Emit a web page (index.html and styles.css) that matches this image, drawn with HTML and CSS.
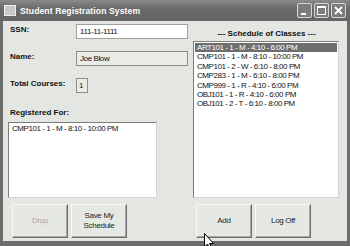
FILE: index.html
```html
<!DOCTYPE html>
<html lang="en">
<head>
    <meta charset="UTF-8">
    <title>Student Registration System</title>
    <link rel="stylesheet" href="styles.css">
</head>
<body>
    <div class="window">
        <div class="titlebar">
            <span class="app-icon"></span>
            <span class="title">Student Registration System</span>
            <div class="controls">
                <span class="ctl"><svg width="15" height="15" viewBox="0 0 15 15"><rect x="4" y="10" width="5" height="2" fill="#fff"/></svg></span>
                <span class="ctl"><svg width="15" height="15" viewBox="0 0 15 15"><rect x="3.5" y="3.5" width="8" height="8" fill="none" stroke="#fff"/><rect x="3" y="3" width="9" height="2" fill="#fff"/></svg></span>
                <span class="ctl"><svg width="15" height="15" viewBox="0 0 15 15"><path d="M4 4 L11 11 M11 4 L4 11" stroke="#fff" stroke-width="2"/></svg></span>
            </div>
        </div>
        <div class="content">
            <div class="left">
                <div class="row">
                    <label>SSN:</label>
                    <div class="field wide">111-11-1111</div>
                </div>
                <div class="row">
                    <label>Name:</label>
                    <div class="field wide readonly">Joe Blow</div>
                </div>
                <div class="row">
                    <label>Total Courses:</label>
                    <div class="field tiny readonly">1</div>
                </div>
                <label class="reg-label">Registered For:</label>
                <div class="listbox reg">
                    <div class="item">CMP101 - 1 - M - 8:10 - 10:00 PM</div>
                </div>
                <div class="buttons">
                    <button disabled>Drop</button>
                    <button>Save My<br>Schedule</button>
                </div>
            </div>
            <div class="right">
                <div class="heading">--- Schedule of Classes ---</div>
                <div class="listbox sched">
                    <div class="item selected">ART101 - 1 - M - 4:10 - 6:00 PM</div>
                    <div class="item">CMP101 - 1 - M - 8:10 - 10:00 PM</div>
                    <div class="item">CMP101 - 2 - W - 6:10 - 8:00 PM</div>
                    <div class="item">CMP283 - 1 - M - 6:10 - 8:00 PM</div>
                    <div class="item">CMP999 - 1 - R - 4:10 - 6:00 PM</div>
                    <div class="item">OBJ101 - 1 - R - 4:10 - 6:00 PM</div>
                    <div class="item">OBJ101 - 2 - T - 6:10 - 8:00 PM</div>
                </div>
                <div class="buttons">
                    <button>Add</button>
                    <button>Log Off</button>
                </div>
                <svg class="cursor" width="12" height="18" viewBox="0 0 12 18"><path d="M0.5 0.5 L0.5 14 L3.5 11 L6 16.5 L8 15.5 L5.5 10.5 L9.5 10.5 Z" fill="#fff" stroke="#000" stroke-width="1"/></svg>
            </div>
        </div>
    </div>
</body>
</html>
```

FILE: styles.css
```css
body {
    margin: 0;
    font-family: "Liberation Sans", Arial, sans-serif;
    font-size: 8px;
    color: #111;
    background: #fff;
}
.window {
    width: 350px;
    height: 246px;
    box-sizing: border-box;
    background: #e4e6e1;
    border: 3px solid #6c6c6c;
    border-top: none;
    border-bottom-width: 5px;
    display: flex;
    flex-direction: column;
}
.titlebar {
    height: 21px;
    margin: 0 -3px;
    background: linear-gradient(#8a8a8a, #6a6a6a 40%, #646464);
    display: flex;
    align-items: center;
    padding: 0 4px;
}
.app-icon {
    width: 12px;
    height: 11px;
    background: #c9c9c9;
    border: 1px solid #eee;
    box-sizing: border-box;
    margin-right: 4px;
}
.title {
    color: #fff;
    font-weight: bold;
    font-size: 8.6px;
    letter-spacing: 0.1px;
}
.controls {
    margin-left: auto;
    display: flex;
    gap: 2px;
}
.ctl {
    width: 15px;
    height: 15px;
    background: #7c7c7c;
    border: 1px solid #d8d8d8;
    border-radius: 2px;
    box-sizing: border-box;
    display: flex;
    align-items: center;
    justify-content: center;
    overflow: hidden;
}
.ctl svg {
    flex: none;
}
.content {
    flex: 1;
    display: flex;
    padding: 3px 0 0 4px;
}
.left {
    width: 186px;
    display: flex;
    flex-direction: column;
}
.row {
    display: flex;
    align-items: flex-start;
    height: 27px;
}
label {
    font-weight: bold;
    width: 66px;
    padding: 1px 0 0 3px;
}
.field {
    height: 15px;
    box-sizing: border-box;
    background: #fff;
    border: 1px solid #a0a0a0;
    padding: 2px 3px;
    letter-spacing: -0.4px;
    line-height: 10px;
}
.wide {
    width: 112px;
}
.tiny {
    width: 12px;
    padding: 2px;
}
.readonly {
    background: #ebebe7;
    border-color: #8c8c8c;
}
.reg-label {
    width: auto;
    margin-top: 2px;
    height: 14px;
}
.listbox {
    background: #fff;
    border: 1px solid #7c7c7c;
    border-right-color: #d4d4d4;
    border-bottom-color: #d4d4d4;
    box-sizing: border-box;
    padding: 1px;
    letter-spacing: -0.45px;
}
.reg {
    width: 149px;
    height: 76px;
    margin-left: 1px;
}
.item {
    height: 9.4px;
    line-height: 9.4px;
    padding-left: 2px;
    white-space: nowrap;
}
.selected {
    background: #6e6e6e;
    color: #fff;
}
.buttons {
    display: flex;
    gap: 3px;
    margin-top: 6px;
    padding-left: 5px;
}
button {
    width: 56px;
    height: 34px;
    font: 8px "Liberation Sans", Arial, sans-serif;
    letter-spacing: -0.3px;
    color: #222;
    background: #e6e8e3;
    border: 1px solid #f6f6f4;
    border-right-color: #6e6e6e;
    border-bottom-color: #6e6e6e;
    box-shadow: inset -1px -1px 0 #a8a8a8;
    padding: 0;
    line-height: 10px;
}
button:disabled {
    color: #a8a8a8;
}
.right {
    width: 147px;
    display: flex;
    flex-direction: column;
    position: relative;
}
.heading {
    font-weight: bold;
    text-align: center;
    height: 17px;
    line-height: 20px;
}
.sched {
    height: 157px;
    width: 146px;
    padding-top: 1px;
}
.right .buttons {
    padding-left: 3px;
}
.cursor {
    position: absolute;
    left: 11px;
    top: 209px;
}
```
